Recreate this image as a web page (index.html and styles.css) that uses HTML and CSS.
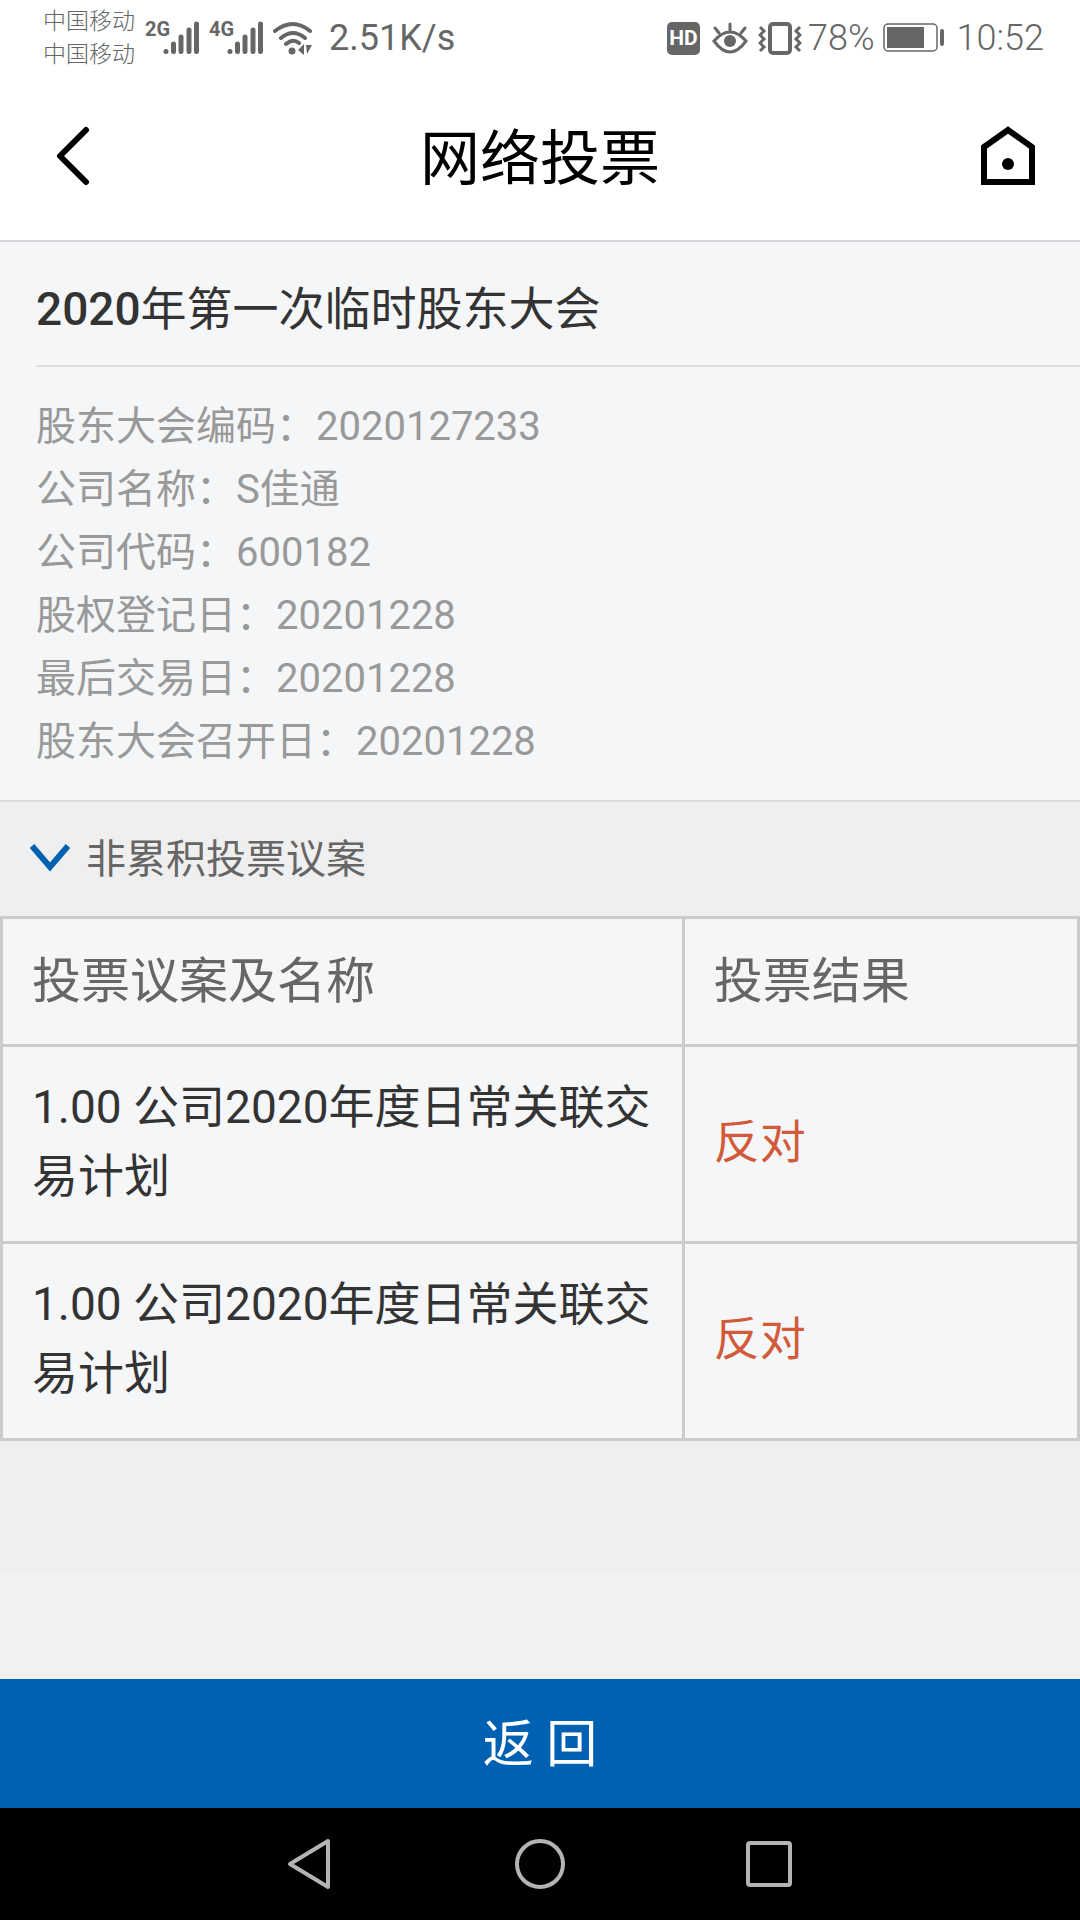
FILE: index.html
```html
<!DOCTYPE html>
<html lang="zh-CN">
<head>
<meta charset="UTF-8">
<meta name="viewport" content="width=device-width, initial-scale=1.0">
<title>网络投票</title>
<link rel="stylesheet" href="styles.css">
</head>
<body>

<div class="status">
	<div class="carriers">
		<span>中国移动</span>
		<span>中国移动</span>
	</div>
	<div class="signal">
		<span class="net">2G</span>
		<svg width="36" height="34" viewBox="0 0 36 34" stroke="#666" stroke-width="5" stroke-linecap="round"><path d="M3 30.500V30.600M10.500 23V30.500M18 16V30.500M26 9V30.500M33.500 3V30.500"/></svg>
	</div>
	<div class="signal">
		<span class="net">4G</span>
		<svg width="36" height="34" viewBox="0 0 36 34" stroke="#666" stroke-width="5" stroke-linecap="round"><path d="M3 30.500V30.600M10.500 23V30.500M18 16V30.500M26 9V30.500M33.500 3V30.500"/></svg>
	</div>
	<svg class="wifi" width="40" height="34" viewBox="0 0 40 34" fill="none" stroke="#666" stroke-width="4" stroke-linecap="round">
		<path d="M2 10Q20 -4 37 10M8 17Q20 7 32 17M13 23Q20 17 26 22"/>
		<circle cx="19" cy="30" r="3.500" fill="#666" stroke="none"/>
		<path d="M25 29L31 23V34ZM33 24H39L34 33Z" fill="#666" stroke="none"/>
	</svg>
	<span class="speed">2.51K/s</span>

	<div class="status-right">
		<span class="hd">HD</span>
		<svg class="eye" width="36" height="34" viewBox="0 0 36 34" fill="none" stroke="#666" stroke-width="3" stroke-linecap="round">
			<path d="M2 20Q18 2 34 20Q18 42 2 20ZM18 9V3M7 12L3 7M29 12L33 7"/>
			<circle cx="18" cy="20" r="6" fill="#666" stroke="none"/>
		</svg>
		<svg class="vibrate" width="44" height="34" viewBox="0 0 44 34" fill="none" stroke="#666" stroke-width="3">
			<rect x="12" y="3" width="20" height="29" rx="3" stroke-width="4"/>
			<path d="M2 6L6 10L2 14L6 18L2 22L6 26L2 30M42 6L38 10L42 14L38 18L42 22L38 26L42 30"/>
		</svg>
		<span class="level">78%</span>
		<svg class="battery" width="62" height="30" viewBox="0 0 62 30">
			<rect x="1" y="1" width="53" height="27" rx="4" fill="none" stroke="#666" stroke-width="1.500"/>
			<rect x="4" y="4" width="37" height="21" fill="#666"/>
			<rect x="57" y="6" width="4" height="17" rx="2" fill="#666"/>
		</svg>
		<span class="clock">10:52</span>
	</div>
</div>

<header class="header">
	<button class="icon-btn" aria-label="后退">
		<svg width="40" height="60" viewBox="0 0 40 60" fill="none" stroke="#000" stroke-width="6" stroke-linecap="round" stroke-linejoin="round"><path d="M34 4L8 30L34 56"/></svg>
	</button>
	<h1>网络投票</h1>
	<a class="icon-btn" href="#" aria-label="首页">
		<svg width="56" height="62" viewBox="0 0 56 62" fill="none" stroke="#000" stroke-width="6"><path d="M4 22L28 5L52 22V57H4Z"/><circle cx="28" cy="39" r="6" fill="#000" stroke="none"/></svg>
	</a>
</header>

<main class="content">
	<section class="meeting">
		<h2><b>2020</b>年第一次临时股东大会</h2>
		<ul class="info">
			<li>股东大会编码：2020127233</li>
			<li>公司名称：S佳通</li>
			<li>公司代码：600182</li>
			<li>股权登记日：20201228</li>
			<li>最后交易日：20201228</li>
			<li>股东大会召开日：20201228</li>
		</ul>
	</section>

	<button class="group" aria-expanded="true">
		<svg width="40" height="30" viewBox="0 0 40 30" fill="none" stroke="#0060b2" stroke-width="6"><path d="M2 3L20 24L38 3"/></svg>
		非累积投票议案
	</button>

	<table class="votes">
		<thead>
			<tr><th class="name">投票议案及名称</th><th>投票结果</th></tr>
		</thead>
		<tbody>
			<tr><td>1.00 公司2020年度日常关联交易计划</td><td class="against">反对</td></tr>
			<tr><td>1.00 公司2020年度日常关联交易计划</td><td class="against">反对</td></tr>
		</tbody>
	</table>
</main>

<div class="gap"></div>
<button class="back">返 回</button>

<nav class="navbar">
	<button aria-label="返回键">
		<svg width="48" height="54" viewBox="0 0 48 54" fill="none" stroke="#b4b4b4" stroke-width="4" stroke-linejoin="round"><path d="M41 4V50L3 27Z"/></svg>
	</button>
	<button aria-label="主屏幕">
		<svg width="54" height="54" viewBox="0 0 54 54" fill="none" stroke="#b4b4b4" stroke-width="4"><circle cx="27" cy="27" r="23"/></svg>
	</button>
	<button aria-label="最近任务">
		<svg width="48" height="54" viewBox="0 0 48 54" fill="none" stroke="#b4b4b4" stroke-width="4"><rect x="3" y="6" width="42" height="42" rx="2"/></svg>
	</button>
</nav>

</body>
</html>
```

FILE: styles.css
```css
* {box-sizing: border-box}

body {
	margin: 0;
	min-height: 100vh;
	display: flex;
	flex-direction: column;
	background: #efefef;
	font-family: Roboto, "Noto Sans CJK SC", sans-serif;
	color: #333;
}

button {
	border: 0;
	padding: 0;
	background: none;
	font-family: inherit;
	color: inherit;
}

svg {display: block}

h1, h2, ul {
	margin: 0;
	padding: 0;
	font-weight: 400;
}

/* status bar */
.status {
	display: flex;
	align-items: center;
	height: 76px;
	padding: 0 36px 0 43px;
	background: #fff;
	color: #666;
}

.carriers {
	display: flex;
	flex-direction: column;
	font-size: 23px;
	line-height: 33px;
	font-weight: 300;
}

.signal {
	display: flex;
	align-items: flex-start;
	margin-left: 10px;
}

.net {
	font: 700 20px/16px "Liberation Sans Narrow", Roboto, sans-serif;
	width: 18px;
}

.wifi {margin-left: 10px}

.speed, .level, .clock {
	font-size: 36px;
	font-weight: 300;
}

.speed {
	margin-left: 16px;
	font-weight: 400;
}

.status-right {
	display: flex;
	align-items: center;
	margin-left: auto;
}

.hd {
	width: 33px;
	border-radius: 5px;
	background: #666;
	color: #fff;
	font-size: 21px;
	line-height: 33px;
	font-weight: 700;
	text-align: center;
}

.eye {margin-left: 12px}
.vibrate {margin-left: 10px}
.level {margin-left: 6px}
.battery {margin: 0 12px 0 8px}

/* title bar */
.header {
	display: flex;
	align-items: center;
	justify-content: space-between;
	height: 166px;
	padding: 0 44px 4px;
	background: #fff;
	border-bottom: 2px solid #d3d5d8;
}

.icon-btn {
	display: flex;
	justify-content: center;
	width: 56px;
}

.header h1 {
	padding-top: 8px;
	font-size: 60px;
	line-height: 84px;
	font-weight: 400;
	color: #000;
}

/* meeting info */
.meeting {
	background: #f5f6f8;
	border-bottom: 2px solid #dcdcdc;
}

.meeting h2 {
	margin-left: 36px;
	padding: 40px 0 29px;
	border-bottom: 2px solid #dcdee0;
	font-size: 46px;
	line-height: 54px;
}

.meeting b {font-weight: 500}

.info {
	padding: 28px 36px 27px;
	list-style: none;
	font-size: 40px;
	line-height: 63px;
	color: #999;
}

.group {
	display: flex;
	align-items: center;
	gap: 16px;
	width: 100%;
	height: 114px;
	padding: 0 30px 6px;
	font-size: 40px;
	color: #666;
}

.group svg {margin-top: 4px}

.votes {
	width: 100%;
	border-collapse: collapse;
	background: #f5f6f8;
}

.votes th, .votes td {
	padding: 26px 29px 30px;
	border: 3px solid #ccc;
	font-size: 46px;
	line-height: 69px;
	font-weight: 400;
	text-align: left;
}

.votes th {
	padding: 28px 29px;
	font-size: 49px;
	color: #666;
}

.votes .name {width: 63.300%}

.votes .against {color: #d25a3a}

.gap {
	flex: 1;
	margin-top: 131px;
	background: #f1f1f1;
}

.back {
	height: 129px;
	padding-bottom: 8px;
	background: #0060b2;
	color: #fff;
	font-size: 51px;
}

/* system keys */
.navbar {
	display: flex;
	align-items: center;
	justify-content: center;
	gap: 178px;
	height: 112px;
	background: #000;
}
```
